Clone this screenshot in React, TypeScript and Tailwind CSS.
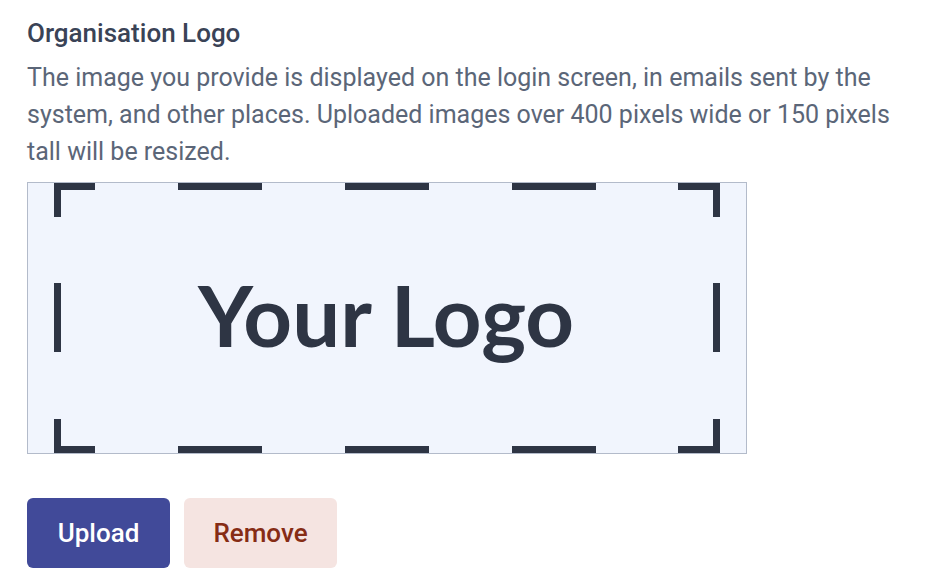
const dashesX = [150, 317, 484]

const LogoPlaceholder = () => {
    return (
        <div className="w-[720px] h-[272px] border border-[#b3bbca] bg-[#f1f5fd]">
            <svg width="718" height="270" viewBox="0 0 718 270" className="block">
                <g fill="#2e3544">
                    {/* corners */}
                    <rect x="26" y="0" width="41" height="7" />
                    <rect x="26" y="0" width="7" height="34" />
                    <rect x="650" y="0" width="42" height="7" />
                    <rect x="685" y="0" width="7" height="34" />
                    <rect x="26" y="263" width="41" height="7" />
                    <rect x="26" y="236" width="7" height="34" />
                    <rect x="650" y="263" width="42" height="7" />
                    <rect x="685" y="236" width="7" height="34" />
                    {/* sides */}
                    <rect x="26" y="100" width="7" height="69" />
                    <rect x="685" y="100" width="7" height="69" />
                    {dashesX.map((x) => (
                        <g key={x}>
                            <rect x={x} y="0" width="84" height="7" />
                            <rect x={x} y="263" width="84" height="7" />
                        </g>
                    ))}
                </g>
                <text
                    x="358"
                    y="164"
                    textAnchor="middle"
                    fill="#2e3544"
                    fontSize="85"
                    fontWeight="700"
                    fontFamily="Lato, 'Liberation Sans', sans-serif"
                >
                    Your Logo
                </text>
            </svg>
        </div>
    )
}

const App = () => {
    return (
        <div className="w-[928px] h-[586px] bg-white pl-[27px] pt-[16px] font-['Roboto','Liberation_Sans',sans-serif]">
            <h2 className="text-[26px] leading-[34px] font-medium text-[#3a4356]">Organisation Logo</h2>
            <p className="mt-[9px] w-[880px] text-[25px] leading-[37px] text-[#5b6678]">
                The image you provide is displayed on the login screen, in emails sent by the system, and other places. Uploaded images over 400 pixels wide or 150 pixels tall will be resized.
            </p>

            <div className="mt-[12px]">
                <LogoPlaceholder />
            </div>

            <div className="mt-[44px] flex gap-[14px]">
                <button className="w-[143px] h-[70px] rounded-[6px] bg-[#414a99] text-white text-[26px] font-medium">
                    Upload
                </button>
                <button className="w-[153px] h-[70px] rounded-[6px] bg-[#f5e4e1] text-[#862c15] text-[26px] font-medium">
                    Remove
                </button>
            </div>
        </div>
    )
}

export default App
